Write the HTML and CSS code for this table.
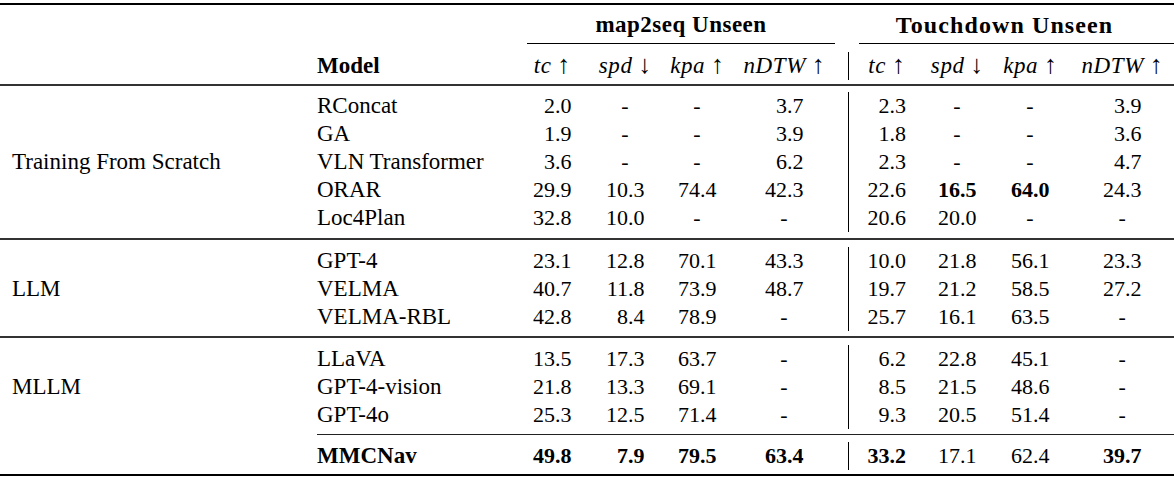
FILE: index.html
```html
<!DOCTYPE html>
<html lang="en">
<head>
<meta charset="utf-8">
<title>Results table</title>
<link rel="stylesheet" href="styles.css">
</head>
<body>
<table class="results">
  <colgroup>
    <col class="c-grp"><col class="c-model">
    <col class="c-tc1"><col class="c-spd1"><col class="c-kpa1"><col class="c-ndtw1">
    <col class="c-tc2"><col class="c-spd2"><col class="c-kpa2"><col class="c-ndtw2">
  </colgroup>
  <thead>
    <tr class="h1">
      <th></th><th></th>
      <th colspan="4"><div class="cm cm-a">map2seq Unseen</div></th>
      <th colspan="4"><div class="cm cm-b">Touchdown Unseen</div></th>
    </tr>
    <tr class="gap g8"><td colspan="10"></td></tr>
    <tr class="h2">
      <th></th>
      <th class="hm">Model</th>
      <th class="mt"><i>tc</i> <span class="ar">↑</span></th>
      <th class="mt"><i>spd</i> <span class="ar">↓</span></th>
      <th class="mt"><i>kpa</i> <span class="ar">↑</span></th>
      <th class="mt d6"><i>nDTW</i> <span class="ar">↑</span></th>
      <th class="mt bar"><i>tc</i> <span class="ar">↑</span></th>
      <th class="mt"><i>spd</i> <span class="ar">↓</span></th>
      <th class="mt"><i>kpa</i> <span class="ar">↑</span></th>
      <th class="mt"><i>nDTW</i> <span class="ar">↑</span></th>
    </tr>
    <tr class="gap g4"><td colspan="10"></td></tr>
    <tr class="rule"><td colspan="10"></td></tr>
  </thead>
  <tbody>
    <tr class="gap g6"><td colspan="10"></td></tr>
    <tr class="r">
      <td class="lbl" rowspan="5">Training From Scratch</td>
      <td class="m">RConcat</td>
      <td class="v"><span class="n">2.0</span></td><td class="v">-</td><td class="v">-</td><td class="v d6"><span class="n">3.7</span></td>
      <td class="v bar"><span class="n">2.3</span></td><td class="v">-</td><td class="v">-</td><td class="v"><span class="n">3.9</span></td>
    </tr>
    <tr class="r">
      <td class="m">GA</td>
      <td class="v"><span class="n">1.9</span></td><td class="v">-</td><td class="v">-</td><td class="v d6"><span class="n">3.9</span></td>
      <td class="v bar"><span class="n">1.8</span></td><td class="v">-</td><td class="v">-</td><td class="v"><span class="n">3.6</span></td>
    </tr>
    <tr class="r">
      <td class="m">VLN Transformer</td>
      <td class="v"><span class="n">3.6</span></td><td class="v">-</td><td class="v">-</td><td class="v d6"><span class="n">6.2</span></td>
      <td class="v bar"><span class="n">2.3</span></td><td class="v">-</td><td class="v">-</td><td class="v"><span class="n">4.7</span></td>
    </tr>
    <tr class="r">
      <td class="m">ORAR</td>
      <td class="v"><span class="n">29.9</span></td><td class="v"><span class="n">10.3</span></td><td class="v"><span class="n">74.4</span></td><td class="v d6"><span class="n">42.3</span></td>
      <td class="v bar"><span class="n">22.6</span></td><td class="v"><span class="n b">16.5</span></td><td class="v"><span class="n b">64.0</span></td><td class="v"><span class="n">24.3</span></td>
    </tr>
    <tr class="r">
      <td class="m">Loc4Plan</td>
      <td class="v"><span class="n">32.8</span></td><td class="v"><span class="n">10.0</span></td><td class="v">-</td><td class="v d6">-</td>
      <td class="v bar"><span class="n">20.6</span></td><td class="v"><span class="n">20.0</span></td><td class="v">-</td><td class="v">-</td>
    </tr>
    <tr class="gap g6"><td colspan="10"></td></tr>
    <tr class="rule"><td colspan="10"></td></tr>
    <tr class="gap g7"><td colspan="10"></td></tr>
    <tr class="r">
      <td class="lbl" rowspan="3">LLM</td>
      <td class="m">GPT-4</td>
      <td class="v"><span class="n">23.1</span></td><td class="v"><span class="n">12.8</span></td><td class="v"><span class="n">70.1</span></td><td class="v d6"><span class="n">43.3</span></td>
      <td class="v bar"><span class="n">10.0</span></td><td class="v"><span class="n">21.8</span></td><td class="v"><span class="n">56.1</span></td><td class="v"><span class="n">23.3</span></td>
    </tr>
    <tr class="r">
      <td class="m">VELMA</td>
      <td class="v"><span class="n">40.7</span></td><td class="v"><span class="n">11.8</span></td><td class="v"><span class="n">73.9</span></td><td class="v d6"><span class="n">48.7</span></td>
      <td class="v bar"><span class="n">19.7</span></td><td class="v"><span class="n">21.2</span></td><td class="v"><span class="n">58.5</span></td><td class="v"><span class="n">27.2</span></td>
    </tr>
    <tr class="r">
      <td class="m">VELMA-RBL</td>
      <td class="v"><span class="n">42.8</span></td><td class="v"><span class="n">8.4</span></td><td class="v"><span class="n">78.9</span></td><td class="v d6">-</td>
      <td class="v bar"><span class="n">25.7</span></td><td class="v"><span class="n">16.1</span></td><td class="v"><span class="n">63.5</span></td><td class="v">-</td>
    </tr>
    <tr class="gap g5"><td colspan="10"></td></tr>
    <tr class="rule"><td colspan="10"></td></tr>
    <tr class="gap g7"><td colspan="10"></td></tr>
    <tr class="r">
      <td class="lbl" rowspan="3">MLLM</td>
      <td class="m">LLaVA</td>
      <td class="v"><span class="n">13.5</span></td><td class="v"><span class="n">17.3</span></td><td class="v"><span class="n">63.7</span></td><td class="v d6">-</td>
      <td class="v bar"><span class="n">6.2</span></td><td class="v"><span class="n">22.8</span></td><td class="v"><span class="n">45.1</span></td><td class="v">-</td>
    </tr>
    <tr class="r">
      <td class="m">GPT-4-vision</td>
      <td class="v"><span class="n">21.8</span></td><td class="v"><span class="n">13.3</span></td><td class="v"><span class="n">69.1</span></td><td class="v d6">-</td>
      <td class="v bar"><span class="n">8.5</span></td><td class="v"><span class="n">21.5</span></td><td class="v"><span class="n">48.6</span></td><td class="v">-</td>
    </tr>
    <tr class="r">
      <td class="m">GPT-4o</td>
      <td class="v"><span class="n">25.3</span></td><td class="v"><span class="n">12.5</span></td><td class="v"><span class="n">71.4</span></td><td class="v d6">-</td>
      <td class="v bar"><span class="n">9.3</span></td><td class="v"><span class="n">20.5</span></td><td class="v"><span class="n">51.4</span></td><td class="v">-</td>
    </tr>
    <tr class="gap g5"><td colspan="10"></td></tr>
    <tr class="rule-c"><td></td><td colspan="9" class="ln"></td></tr>
    <tr class="gap g7"><td colspan="10"></td></tr>
    <tr class="r">
      <td class="lbl"></td>
      <td class="m b">MMCNav</td>
      <td class="v"><span class="n b">49.8</span></td><td class="v"><span class="n b">7.9</span></td><td class="v"><span class="n b">79.5</span></td><td class="v d6"><span class="n b">63.4</span></td>
      <td class="v bar"><span class="n b">33.2</span></td><td class="v"><span class="n">17.1</span></td><td class="v"><span class="n">62.4</span></td><td class="v"><span class="n b">39.7</span></td>
    </tr>
    <tr class="gap g4"><td colspan="10"></td></tr>
  </tbody>
</table>
</body>
</html>
```

FILE: styles.css
```css
* { box-sizing: border-box; }
html, body { margin: 0; padding: 0; background: #fff; }
body {
  font-family: "Liberation Serif", "Times New Roman", serif;
  font-size: 23px;
  color: #000;
}

.results {
  width: 1174px;
  margin-top: 3px;
  border-collapse: separate;
  border-spacing: 0;
  table-layout: fixed;
  border-top: 2px solid #000;
  border-bottom: 2px solid #000;
}
.results th, .results td {
  padding: 0;
  font-weight: normal;
  text-align: left;
}

.c-grp { width: 317px; }
.c-model { width: 198px; }
.c-tc1 { width: 74px; }
.c-spd1 { width: 72px; }
.c-kpa1 { width: 72px; }
.c-ndtw1 { width: 115px; }
.c-tc2 { width: 76px; }
.c-spd2 { width: 66px; }
.c-kpa2 { width: 80px; }
.c-ndtw2 { width: 104px; }

/* header row 1 with cmidrules */
.h1 th { height: 39px; vertical-align: bottom; }
.cm {
  border-bottom: 1px solid #000;
  line-height: 28px;
  padding-bottom: 4px;
  font-weight: bold;
  text-align: center;
}
.cm-a { margin: 0 13px 0 12px; letter-spacing: 0.5px; }
.cm-b { margin: 0 0 0 11px; padding-right: 24px; font-size: 24px; letter-spacing: 1.1px; }

/* header row 2 */
.h2 th { height: 28px; line-height: 28px; vertical-align: middle; }
.h2 .hm { font-weight: bold; }
.h2 .mt { text-align: center; }
.h2 .mt i { letter-spacing: 0.6px; }
.ar { font-size: 1.12em; line-height: 0; }

/* spacing + rules */
.gap td { padding: 0; font-size: 0; line-height: 0; }
.g4 td { height: 4px; }
.g5 td { height: 5px; }
.g6 td { height: 6px; }
.g7 td { height: 7px; }
.g8 td { height: 8px; }
.rule td { height: 2px; font-size: 0; line-height: 0; background: #333; }
.rule-c td { height: 1px; font-size: 0; line-height: 0; }
.rule-c .ln { background: #222; }

/* body rows */
.r td { height: 28px; line-height: 28px; vertical-align: middle; white-space: nowrap; }
.lbl { padding-left: 12px !important; }
.m.b { font-weight: bold; }
.v { text-align: center !important; font-size: 22px; }
.d6 { padding-right: 13px !important; }
.bar { border-left: 1px solid #000; }
.n { display: inline-block; width: 39px; text-align: right; }
.n.b { font-weight: bold; }
```
